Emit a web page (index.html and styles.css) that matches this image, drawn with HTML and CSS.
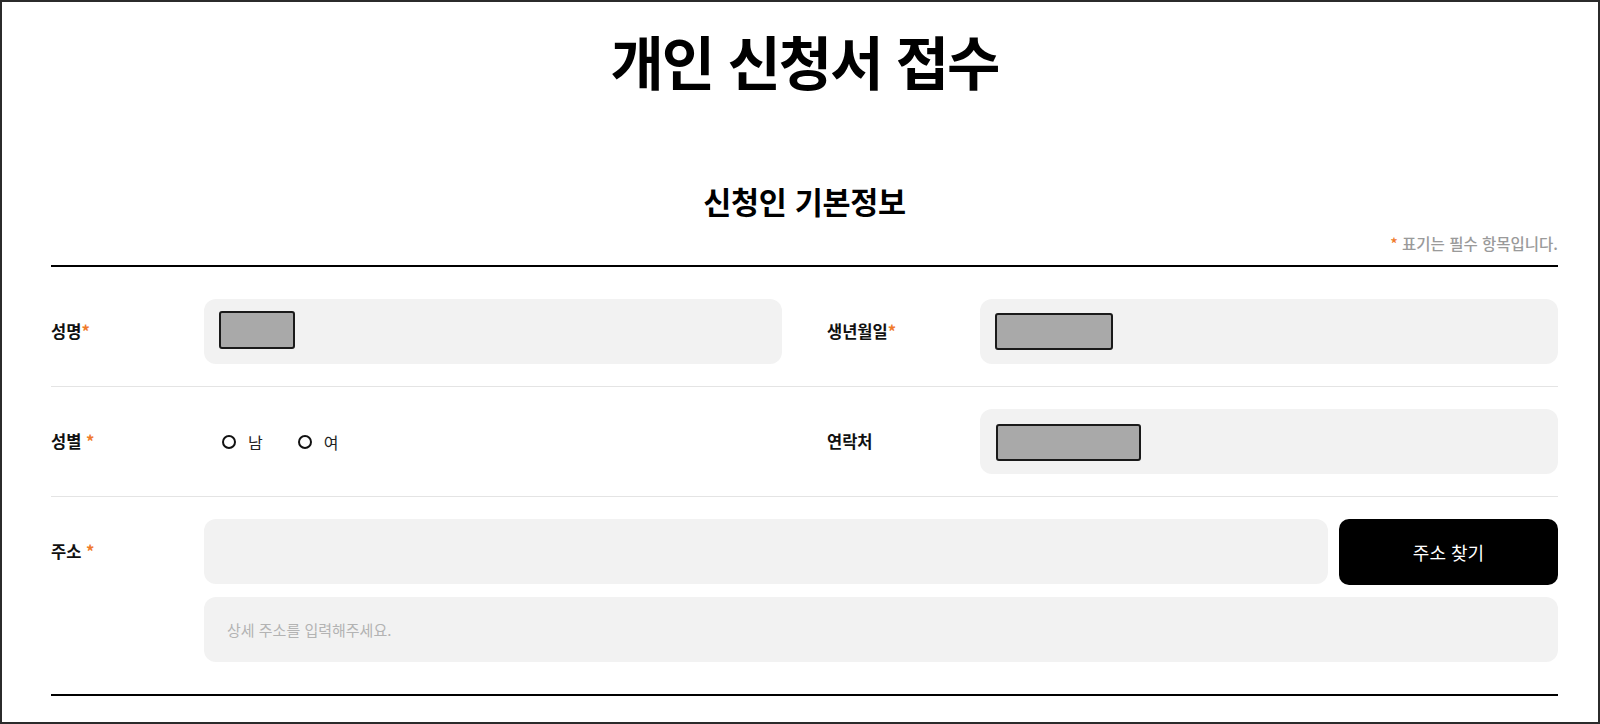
FILE: index.html
```html
<!DOCTYPE html>
<html lang="ko">
<head>
<meta charset="utf-8">
<title>개인 신청서 접수</title>
<link rel="stylesheet" href="styles.css">
</head>
<body>
<div class="page">
  <h1 class="title">개인 신청서 접수</h1>
  <h2 class="section-title">신청인 기본정보</h2>
  <p class="note"><span class="req">*</span> 표기는 필수 항목입니다.</p>
  <div class="form">
    <div class="row">
      <div class="field">
        <div class="label">성명<span class="req">*</span></div>
        <div class="control">
          <div class="input"><span class="redact redact-name"></span></div>
        </div>
      </div>
      <div class="field">
        <div class="label">생년월일<span class="req">*</span></div>
        <div class="control">
          <div class="input"><span class="redact redact-birth"></span></div>
        </div>
      </div>
    </div>
    <div class="row">
      <div class="field">
        <div class="label">성별 <span class="req">*</span></div>
        <div class="control">
          <div class="radios">
            <label class="radio"><span class="circle"></span><span class="radio-text">남</span></label>
            <label class="radio"><span class="circle"></span><span class="radio-text">여</span></label>
          </div>
        </div>
      </div>
      <div class="field">
        <div class="label">연락처</div>
        <div class="control">
          <div class="input input-contact"><span class="redact redact-phone"></span></div>
        </div>
      </div>
    </div>
    <div class="row row-last">
      <div class="field field-full">
        <div class="label">주소 <span class="req">*</span></div>
        <div class="control address">
          <div class="address-line">
            <div class="input input-grow"></div>
            <button class="btn-search" type="button">주소 찾기</button>
          </div>
          <div class="input input-detail"><span class="placeholder">상세 주소를 입력해주세요.</span></div>
        </div>
      </div>
    </div>
  </div>
</div>
</body>
</html>
```

FILE: styles.css
```css
html, body {
  margin: 0;
  padding: 0;
  background: #ffffff;
}

.page {
  box-sizing: border-box;
  width: 1600px;
  height: 724px;
  border: 2px solid #2b2b2b;
  padding: 0 40px 0 49px;
  font-family: "Noto Sans CJK KR", "Noto Sans", sans-serif;
  color: #111111;
  overflow: hidden;
}

.title {
  margin: 0;
  padding-top: 21px;
  font-size: 58px;
  line-height: 74px;
  font-weight: 700;
  text-align: center;
  letter-spacing: -2px;
  color: #000000;
}

.section-title {
  margin: 84px 0 0;
  font-size: 30.5px;
  line-height: 40px;
  font-weight: 700;
  text-align: center;
  letter-spacing: -0.3px;
  color: #000000;
}

.note {
  margin: 12px 0 0;
  font-size: 15.5px;
  line-height: 20px;
  font-weight: 500;
  text-align: right;
  color: #9a9a9a;
}

.req {
  color: #f07a2a;
}

.form {
  margin-top: 12px;
  border-top: 2px solid #000000;
  border-bottom: 2px solid #000000;
  padding: 10px 0 10px;
}

.row {
  display: flex;
  gap: 45px;
  padding: 22px 0;
  border-bottom: 1px solid #e4e4e4;
}

.row-last {
  border-bottom: none;
}

.field {
  flex: 1 1 0;
  display: flex;
  min-width: 0;
}

.field-full {
  flex: 1 1 100%;
}

.label {
  flex: 0 0 153px;
  font-size: 16.5px;
  font-weight: 700;
  line-height: 65px;
  height: 65px;
  color: #111111;
}

.control {
  flex: 1 1 auto;
  min-width: 0;
}

.input {
  box-sizing: border-box;
  height: 65px;
  background: #f2f2f2;
  border-radius: 12px;
  display: flex;
  align-items: center;
  padding-left: 15px;
}

.input-contact {
  padding-left: 16px;
}

.redact {
  display: block;
  box-sizing: border-box;
  background: #a9a9a9;
  border: 2px solid #1a1a1a;
  border-radius: 3px;
}

.redact-name {
  width: 76px;
  height: 38px;
  margin-top: -3px;
}

.redact-birth {
  width: 118px;
  height: 37px;
  margin-top: -1px;
}

.redact-phone {
  width: 145px;
  height: 37px;
  margin-top: 1px;
}

.radios {
  height: 65px;
  display: flex;
  align-items: center;
  gap: 35px;
  padding-left: 18px;
}

.radio {
  display: flex;
  align-items: center;
  gap: 12px;
}

.circle {
  box-sizing: border-box;
  width: 14px;
  height: 14px;
  border: 2px solid #111111;
  border-radius: 50%;
}

.radio-text {
  font-size: 16px;
  line-height: 20px;
  color: #222222;
}

.address {
  display: flex;
  flex-direction: column;
  gap: 12px;
}

.address-line {
  display: flex;
  gap: 11px;
}

.input-grow {
  flex: 1 1 auto;
}

.btn-search {
  flex: 0 0 219px;
  height: 66px;
  border: none;
  border-radius: 10px;
  background: #000000;
  color: #ffffff;
  font-family: "Noto Sans CJK KR", "Noto Sans", sans-serif;
  font-size: 18px;
  font-weight: 400;
  cursor: pointer;
}

.input-detail {
  padding-left: 23px;
}

.placeholder {
  font-size: 15px;
  color: #b3b3b3;
}
```
